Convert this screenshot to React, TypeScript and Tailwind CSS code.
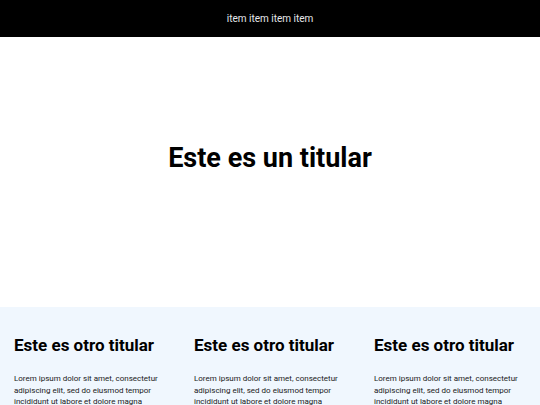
export default function App() {
  const cols = [1, 2, 3];

  return (
    <div className="min-h-screen bg-white" style={{ fontFamily: "Roboto, sans-serif" }}>
      <nav className="h-[37px] bg-black flex items-center justify-center">
        <span className="text-[10px] text-gray-200">item item item item</span>
      </nav>

      <section className="h-[270px] flex items-center justify-center pb-[28px]">
        <h1 className="text-[27px] font-bold text-black">Este es un titular</h1>
      </section>

      <section className="bg-[#f0f7fe] grid grid-cols-3 pt-[26px] pb-6">
        {cols.map((c) => (
          <div key={c} className="px-[14px]">
            <h2 className="text-[17px] font-bold text-black leading-[24px]">
              Este es otro titular
            </h2>
            <p className="mt-[16px] text-[8px] leading-[11.5px] text-[#1a1a1a]">
              Lorem ipsum dolor sit amet, consectetur adipiscing elit, sed do eiusmod tempor
              incididunt ut labore et dolore magna aliqua.
            </p>
          </div>
        ))}
      </section>
    </div>
  );
}
